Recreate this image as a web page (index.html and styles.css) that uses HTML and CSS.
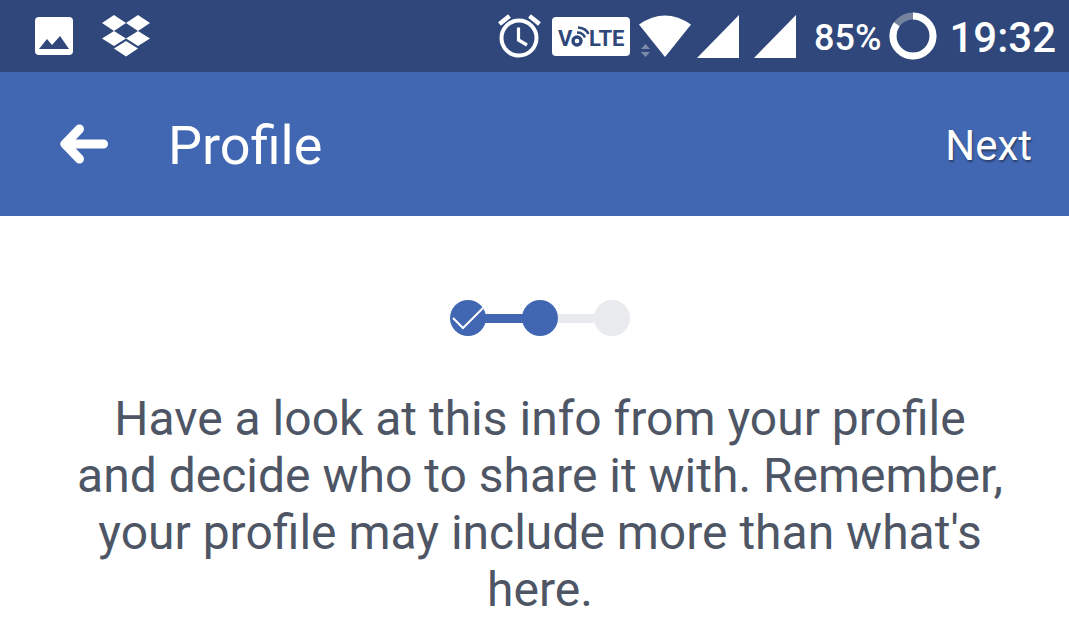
FILE: index.html
```
<!DOCTYPE html>
<html lang="en">
<head>
    <meta charset="UTF-8">
    <meta name="viewport" content="width=device-width, initial-scale=1.0">
    <title>Profile</title>
    <link rel="stylesheet" href="styles.css">
</head>
<body>
    <div class="status-bar">
        <div class="notifications">
            <svg width="38" height="38" viewBox="0 0 38 38" aria-label="Picture">
                <rect width="38" height="38" rx="4" fill="#fff"/>
                <path d="M4 32 L12 22 L17 28 L25 19 L34 32 Z" fill="#2f477a"/>
            </svg>
            <svg width="48" height="42" viewBox="0 0 48 42" aria-label="Dropbox">
                <path d="M12 0 L24 8 L12 16 L0 8 Z M36 0 L48 8 L36 16 L24 8 Z M12 16 L24 23.5 L12 31 L0 23.5 Z M36 16 L48 23.5 L36 31 L24 23.5 Z M24 26 L36 33.5 L24 41.5 L12 33.5 Z" fill="#fff"/>
            </svg>
        </div>
        <div class="system">
            <svg width="43" height="44" viewBox="0 0 43 44" aria-label="Alarm">
                <circle cx="21" cy="24" r="17.5" fill="none" stroke="#fff" stroke-width="4"/>
                <path d="M20.5 13.5 V26 L29 31" fill="none" stroke="#fff" stroke-width="3.2"/>
                <path d="M1.5 10 L11.5 2 M31.5 2 L41.5 10" stroke="#fff" stroke-width="4.5"/>
            </svg>
            <svg class="volte" width="78" height="39" viewBox="0 0 78 39" aria-label="VoLTE">
                <rect width="78" height="39" rx="4" fill="#fff"/>
                <text x="6" y="29">V</text>
                <text x="37" y="29">LTE</text>
                <circle cx="25" cy="24" r="4" fill="none" stroke="#2f477a" stroke-width="3.4"/>
                <path d="M25 15.5 Q31 15.5 33 20.5 M26 10.5 Q34 11 36.5 17" fill="none" stroke="#2f477a" stroke-width="2.4"/>
            </svg>
            <svg class="wifi" width="53" height="42" viewBox="0 0 53 42" aria-label="Wi-Fi">
                <path d="M0 9.5 Q26 -8.5 52 9.5 L26 42 Z" fill="#fff"/>
                <path d="M2 34 L6.5 29 L11 34 Z M2 37 L6.5 42 L11 37 Z" fill="#7d8aac"/>
            </svg>
            <svg class="signal" width="42" height="43" viewBox="0 0 42 43" aria-label="Signal, SIM 1">
                <path d="M42 0 V43 H0 Z" fill="#fff"/>
            </svg>
            <svg class="signal second" width="42" height="43" viewBox="0 0 42 43" aria-label="Signal, SIM 2">
                <path d="M42 0 V43 H0 Z" fill="#fff"/>
            </svg>
            <span class="percent">85%</span>
            <svg class="battery" width="48" height="48" viewBox="0 0 48 48" aria-label="Battery">
                <circle cx="24" cy="24" r="20" fill="none" stroke="#75839f" stroke-width="7"/>
                <circle cx="24" cy="24" r="20" fill="none" stroke="#fff" stroke-width="7" pathLength="100" stroke-dasharray="85 15" transform="rotate(-90 24 24)"/>
            </svg>
            <span class="time">19:32</span>
        </div>
    </div>

    <header class="toolbar">
        <button class="back" aria-label="Back">
            <svg width="48" height="40" viewBox="0 0 48 40">
                <path d="M19.5 5 L5 20 L19.5 35 M7 20 H43.5" fill="none" stroke="#fff" stroke-width="9" stroke-linecap="round" stroke-linejoin="round"/>
            </svg>
        </button>
        <h1>Profile</h1>
        <button class="next">Next</button>
    </header>

    <main>
        <div class="steps">
            <span class="step done">
                <svg width="36" height="36" viewBox="0 0 36 36">
                    <path d="M3 18 L13 28 L33 8" fill="none" stroke="#fff" stroke-width="2"/>
                </svg>
            </span>
            <span class="line done"></span>
            <span class="step done"></span>
            <span class="line"></span>
            <span class="step"></span>
        </div>
        <p>Have a look at this info from your profile and decide who to share it with. Remember, your profile may include more than what's here.</p>
    </main>
</body>
</html>
```

FILE: styles.css
```
* {
    box-sizing: border-box;
}
body {
    margin: 0;
    font-family: Roboto, sans-serif;
    background: white;
}
svg {
    display: block;
    flex: none;
}
.status-bar {
    display: flex;
    align-items: center;
    justify-content: space-between;
    height: 72px;
    padding: 0 13px 0 35px;
    background: #2f477a;
    color: white;
}
.notifications {
    display: flex;
    align-items: center;
    gap: 29px;
}
.system {
    display: flex;
    align-items: center;
    font-weight: 500;
}
.volte {
    margin: 0 9px 0 11px;
}
.volte text {
    font-size: 22px;
    font-weight: 700;
    fill: #2f477a;
}
.signal {
    margin-left: 5px;
}
.second {
    margin-left: 15px;
}
.percent {
    margin-left: 18px;
    padding-top: 4px;
    font-size: 36px;
    line-height: 48px;
}
.battery {
    margin: 0 12px 0 8px;
}
.time {
    padding-top: 4px;
    font-size: 42px;
    line-height: 48px;
}
.toolbar {
    display: flex;
    align-items: center;
    height: 144px;
    padding: 0 37px 0 60px;
    background: #4267b2;
    color: white;
}
.toolbar button {
    padding: 0;
    border: none;
    background: none;
    color: white;
    font-family: inherit;
    cursor: pointer;
}
.toolbar h1 {
    flex: 1;
    margin: 0 0 0 60px;
    padding-top: 4px;
    font-size: 54px;
    font-weight: 400;
    line-height: 64px;
}
.toolbar .next {
    padding-top: 4px;
    font-size: 42px;
    line-height: 48px;
    text-shadow: 1px 2px 2px rgba(0, 0, 0, 0.4);
}
main {
    padding: 84px 60px 0 71px;
}
.steps {
    display: flex;
    align-items: center;
    justify-content: center;
}
.step {
    width: 36px;
    height: 36px;
    border-radius: 50%;
    background: #e9eaee;
}
.line {
    width: 36px;
    height: 9px;
    background: #e9eaee;
}
.step.done,
.line.done {
    background: #4267b2;
}
/* tuck the line ends under the round dots */
.line.done {
    width: 38px;
    margin: 0 -1px;
}
main p {
    margin: 54px 0 0;
    font-size: 48px;
    line-height: 57px;
    text-align: center;
    color: #4e5665;
}
```
